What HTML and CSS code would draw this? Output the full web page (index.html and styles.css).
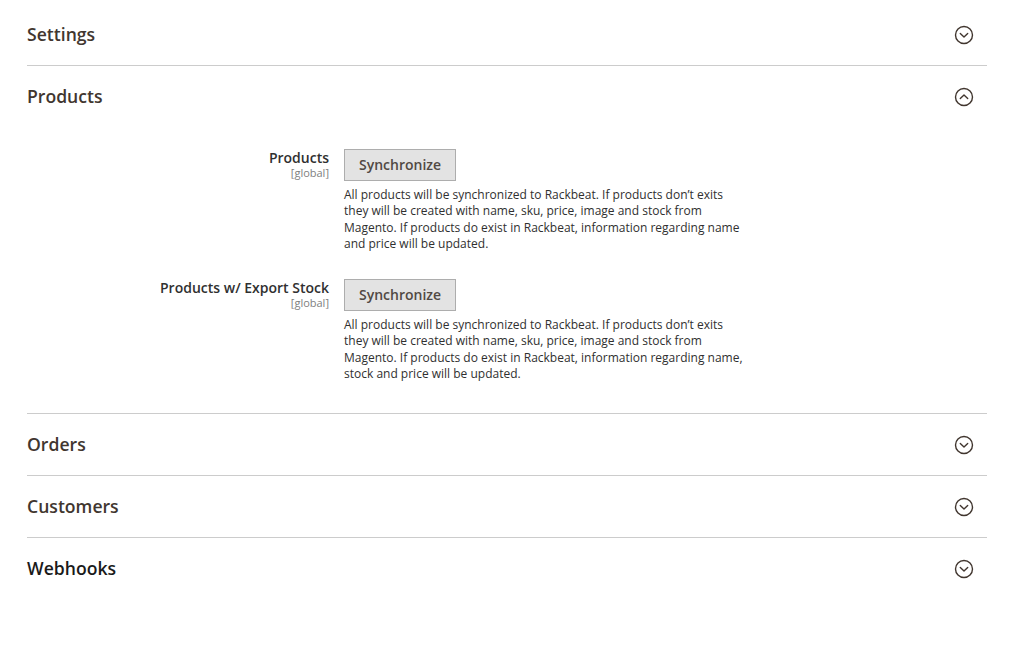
FILE: index.html
```html
<!DOCTYPE html>
<html lang="en">

<head>
    <meta charset="UTF-8">
    <meta name="viewport" content="width=device-width, initial-scale=1.0">
    <title>Rackbeat Configuration</title>
    <link rel="stylesheet" href="styles.css">
</head>

<body>
    <div class="container">
        <div class="section">
            <div class="section-head">
                <span class="section-title">Settings</span>
                <svg class="toggle" width="20" height="20" viewBox="0 0 20 20">
                    <circle cx="10" cy="10" r="8.5" />
                    <polyline points="6.3,8.5 10,12 13.7,8.5" />
                </svg>
            </div>
        </div>

        <div class="section">
            <div class="section-head">
                <span class="section-title">Products</span>
                <svg class="toggle" width="20" height="20" viewBox="0 0 20 20">
                    <circle cx="10" cy="10" r="8.5" />
                    <polyline points="6.3,11.5 10,8 13.7,11.5" />
                </svg>
            </div>
            <div class="section-body">
                <div class="field">
                    <div class="label">
                        <span class="label-text">Products</span>
                        <span class="scope">[global]</span>
                    </div>
                    <div class="value">
                        <button type="button" class="btn">Synchronize</button>
                        <p class="note">All products will be synchronized to Rackbeat. If products don’t exits they will be created with name, sku, price, image and stock from Magento. If products do exist in Rackbeat, information regarding name and price will be updated.</p>
                    </div>
                </div>
                <div class="field">
                    <div class="label">
                        <span class="label-text">Products w/ Export Stock</span>
                        <span class="scope">[global]</span>
                    </div>
                    <div class="value">
                        <button type="button" class="btn">Synchronize</button>
                        <p class="note">All products will be synchronized to Rackbeat. If products don’t exits they will be created with name, sku, price, image and stock from Magento. If products do exist in Rackbeat, information regarding name, stock and price will be updated.</p>
                    </div>
                </div>
            </div>
        </div>

        <div class="section">
            <div class="section-head">
                <span class="section-title">Orders</span>
                <svg class="toggle" width="20" height="20" viewBox="0 0 20 20">
                    <circle cx="10" cy="10" r="8.5" />
                    <polyline points="6.3,8.5 10,12 13.7,8.5" />
                </svg>
            </div>
        </div>

        <div class="section">
            <div class="section-head">
                <span class="section-title">Customers</span>
                <svg class="toggle" width="20" height="20" viewBox="0 0 20 20">
                    <circle cx="10" cy="10" r="8.5" />
                    <polyline points="6.3,8.5 10,12 13.7,8.5" />
                </svg>
            </div>
        </div>

        <div class="section last">
            <div class="section-head">
                <span class="section-title active">Webhooks</span>
                <svg class="toggle" width="20" height="20" viewBox="0 0 20 20">
                    <circle cx="10" cy="10" r="8.5" />
                    <polyline points="6.3,8.5 10,12 13.7,8.5" />
                </svg>
            </div>
        </div>
    </div>
</body>

</html>
```

FILE: styles.css
```css
body {
    font-family: "Open Sans", "Noto Sans", Arial, sans-serif;
    margin: 0;
    padding: 0;
    background-color: #fff;
    color: #303030;
}

.container {
    width: 960px;
    margin-left: 27px;
    padding-top: 4px;
}

.section {
    border-bottom: 1px solid #cccccc;
}

.section.last {
    border-bottom: none;
}

.section-head {
    height: 61px;
    display: flex;
    align-items: center;
    justify-content: space-between;
}

.section-title {
    font-size: 17.6px;
    font-weight: 600;
    color: #41362f;
    padding-bottom: 1px;
}

.section-title.active {
    color: #1a1a1a;
}

.toggle {
    margin-right: 13px;
    fill: none;
    stroke: #41362f;
    stroke-width: 1.4;
    stroke-linecap: round;
    stroke-linejoin: round;
}

.section-body {
    padding: 22px 0 31px;
    display: flex;
    flex-direction: column;
    gap: 27px;
}

.field {
    display: flex;
}

.label {
    width: 317px;
    padding-right: 15px;
    box-sizing: border-box;
    display: flex;
    flex-direction: column;
    align-items: flex-end;
    text-align: right;
}

.label-text {
    font-size: 14px;
    font-weight: 600;
    line-height: 17px;
    color: #303030;
}

.scope {
    font-size: 11px;
    line-height: 14px;
    color: #808080;
}

.value {
    width: 400px;
}

.btn {
    font-family: inherit;
    font-size: 14px;
    font-weight: 600;
    line-height: 18px;
    color: #514943;
    background-color: #e3e3e3;
    border: 1px solid #adadad;
    padding: 6px 14px;
    cursor: pointer;
}

.btn:hover {
    background-color: #dbdbdb;
}

.note {
    margin: 6px 0 0;
    font-size: 12px;
    line-height: 16.3px;
    color: #303030;
}
```
